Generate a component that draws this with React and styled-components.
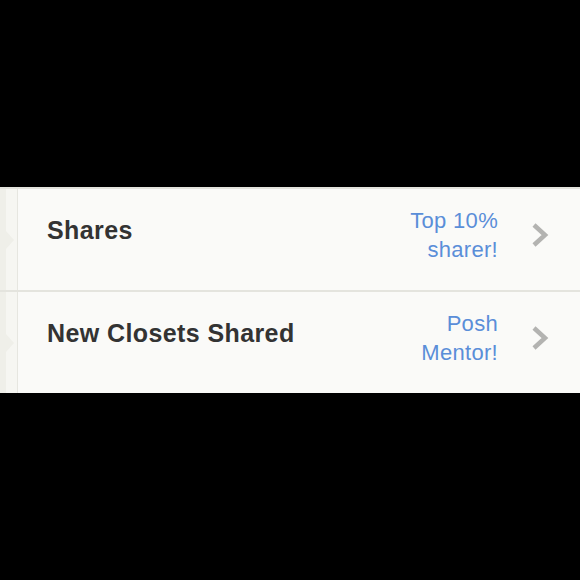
import React from 'react';
import styled, { createGlobalStyle } from 'styled-components';

const GlobalStyle = createGlobalStyle`
  html, body {
    margin: 0;
    padding: 0;
    background: #000;
  }
  body {
    width: 580px;
    height: 580px;
    display: flex;
    flex-direction: column;
    justify-content: center;
  }
`;

const Panel = styled.div`
  width: 580px;
  background: #fafaf8;
  border-top: 2px solid #e3e3dd;
  display: flex;
  flex-direction: column;
`;

const Row = styled.div`
  position: relative;
  height: ${(p) => p.$height}px;
  box-sizing: border-box;
  padding-bottom: 10px;
  display: flex;
  align-items: center;
  border-bottom: ${(p) => (p.$last ? 'none' : '2px solid #e4e4de')};
`;

const Rail = styled.div`
  align-self: stretch;
  margin-bottom: -10px;
  width: 17px;
  flex-shrink: 0;
  background: linear-gradient(to right, #efefe9 0, #efefe9 6px, #f6f6f2 6px);
  border-right: 1px solid #e6e6e0;
  position: relative;

  &::after {
    content: '';
    position: absolute;
    left: 6px;
    top: 50%;
    margin-top: -9px;
    border-top: 9px solid transparent;
    border-bottom: 9px solid transparent;
    border-left: 8px solid #efefe9;
  }
`;

const Label = styled.div`
  flex: 1;
  padding-left: 29px;
  padding-bottom: 8px;
  font-family: 'Liberation Sans', Arial, sans-serif;
  font-weight: 700;
  font-size: 25px;
  letter-spacing: 0.4px;
  color: #333333;
`;

const Badge = styled.div`
  font-family: 'Liberation Sans', Arial, sans-serif;
  font-size: 22px;
  letter-spacing: 0.3px;
  line-height: 29px;
  color: #5a8ed8;
  text-align: right;
`;

const Chevron = styled.svg`
  width: 20px;
  height: 26px;
  margin: 0 30px 0 32px;
  filter: blur(0.5px);
`;

const rows = [
  { label: 'Shares', badge: ['Top 10%', 'sharer!'], height: 103 },
  { label: 'New Closets Shared', badge: ['Posh', 'Mentor!'], height: 101 },
];

export default function App() {
  return (
    <>
      <GlobalStyle />
      <Panel>
        {rows.map((r, i) => (
          <Row key={r.label} $height={r.height} $last={i === rows.length - 1}>
            <Rail />
            <Label>{r.label}</Label>
            <Badge>
              {r.badge[0]}
              <br />
              {r.badge[1]}
            </Badge>
            <Chevron viewBox="0 0 20 26">
              <path d="M4 3 L15 13 L4 23" fill="none" stroke="#b3b3b1" strokeWidth="4.5" />
            </Chevron>
          </Row>
        ))}
      </Panel>
    </>
  );
}
